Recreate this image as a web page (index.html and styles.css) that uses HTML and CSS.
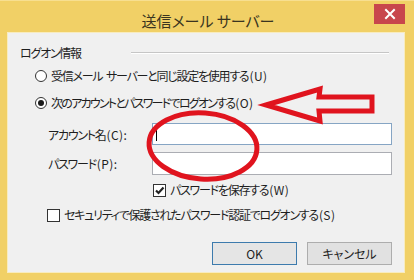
FILE: index.html
```html
<!DOCTYPE html>
<html lang="ja">
<head>
<meta charset="utf-8">
<title>送信メール サーバー</title>
<link rel="stylesheet" href="styles.css">
</head>
<body>
<div class="window">
  <div class="titlebar">
    <span class="title">送信メール サーバー</span>
    <div class="close" aria-label="閉じる">
      <svg width="12" height="12" viewBox="0 0 12 12"><path d="M2 2 L10 10 M10 2 L2 10" stroke="#fff" stroke-width="2" stroke-linecap="square"/></svg>
    </div>
  </div>
  <div class="client">
    <div class="group-head">
      <span class="group-label">ログオン情報</span>
      <span class="rule"></span>
    </div>
    <div class="opt opt-radio1">
      <span class="radio"></span>
      <span class="text">受信メール<span class="sp"> </span>サーバーと同じ設定を使用する<span class="key">(U)</span></span>
    </div>
    <div class="opt opt-radio2">
      <span class="radio checked"></span>
      <span class="text">次のアカウントとパスワードでログオンする<span class="key">(O)</span></span>
    </div>
    <div class="field field-account">
      <span class="field-label">アカウント名<span class="key">(C):</span></span>
      <div class="input focused"><span class="caret"></span></div>
    </div>
    <div class="field field-password">
      <span class="field-label">パスワード<span class="key">(P):</span></span>
      <div class="input"></div>
    </div>
    <div class="opt opt-save">
      <span class="check checked">
        <svg width="11" height="11" viewBox="0 0 11 11"><path d="M2 5.5 L4.5 8 L9.5 2.5" stroke="#222" stroke-width="2.2" fill="none"/></svg>
      </span>
      <span class="text">パスワードを保存する<span class="key">(W)</span></span>
    </div>
    <div class="opt opt-secure">
      <span class="check"></span>
      <span class="text">セキュリティで保護されたパスワード認証でログオンする<span class="key">(S)</span></span>
    </div>
    <div class="buttons">
      <div class="btn default">OK</div>
      <div class="btn">キャンセル</div>
    </div>
  </div>
  <svg class="annot" width="414" height="280" viewBox="0 0 414 280">
    <ellipse cx="203" cy="145" rx="54" ry="33" fill="none" stroke="#e0141e" stroke-width="5" transform="rotate(4 203 145)"/>
    <polygon points="266,104 320,88 319,96 372,96 372,110 319,110 320,120" fill="none" stroke="#e0141e" stroke-width="5" stroke-linejoin="miter"/>
  </svg>
</div>
</body>
</html>
```

FILE: styles.css
```css
* { box-sizing: border-box; }
html, body {
  margin: 0;
  padding: 0;
  width: 414px;
  height: 280px;
  overflow: hidden;
}
body {
  font-family: "Noto Sans CJK JP", "Noto Sans", sans-serif;
  font-feature-settings: "palt" 1;
  color: #1e1e1e;
}
.window {
  position: relative;
  width: 414px;
  height: 280px;
  background: #f1d066;
  border-top: 1px solid #f7df90;
  display: flex;
  flex-direction: column;
}
.titlebar {
  position: relative;
  height: 31px;
  flex: none;
  display: flex;
  align-items: center;
  justify-content: center;
}
.title {
  font-size: 15px;
  color: #3a3420;
  margin-top: 8px;
  margin-left: 2px;
}
.close {
  position: absolute;
  left: 374px;
  top: 3px;
  width: 31px;
  height: 20px;
  background: #c8464c;
  display: flex;
  align-items: center;
  justify-content: center;
}
.client {
  margin: 0 9px 0 7px;
  height: 241px;
  background: #f0f0f0;
  border: 1px solid #f8ecbf;
  padding: 12px 12px 0 12px;
  display: flex;
  flex-direction: column;
  font-size: 12px;
  letter-spacing: -1.25px;
}
.key {
  letter-spacing: 0.4px;
  margin-left: 1px;
}
.sp {
  letter-spacing: 1px;
}
.group-head {
  height: 16px;
  display: flex;
  align-items: center;
}
.group-label {
  line-height: 16px;
}
.rule {
  margin-left: 50px;
  margin-right: 3px;
  flex: 1;
  height: 2px;
  border-top: 1px solid #c6c6c6;
  border-bottom: 1px solid #ffffff;
}
.opt {
  height: 16px;
  display: flex;
  align-items: center;
  line-height: 16px;
}
.opt-radio1 { margin-top: 7px; margin-left: 15px; }
.opt-radio2 { margin-top: 11px; margin-left: 15px; }
.opt-radio2 .text { letter-spacing: -1.75px; }
.opt-radio2 .key { letter-spacing: 0.4px; }
.radio {
  width: 12px;
  height: 12px;
  border-radius: 50%;
  border: 1px solid #333;
  background: #fff;
  margin-right: 4px;
  display: flex;
  align-items: center;
  justify-content: center;
  flex: none;
}
.radio.checked::after {
  content: "";
  width: 6px;
  height: 6px;
  border-radius: 50%;
  background: #1a1a1a;
}
.check {
  width: 13px;
  height: 13px;
  border: 1px solid #333;
  background: #fff;
  margin-right: 4px;
  display: flex;
  align-items: center;
  justify-content: center;
  flex: none;
}
.field {
  display: flex;
  align-items: center;
  height: 22px;
}
.field-account { margin-top: 12px; }
.field-password { margin-top: 7px; height: 23px; }
.field-label {
  width: 104px;
  margin-left: 28px;
  flex: none;
}
.input {
  flex: 1;
  height: 100%;
  background: #fff;
  border: 1px solid #abadb3;
  display: flex;
  align-items: center;
}
.input.focused { border-color: #86a5c4; }
.caret {
  width: 1px;
  height: 13px;
  background: #000;
  margin-left: 3px;
}
.opt-save { margin-top: 7px; margin-left: 133px; }
.opt-secure { margin-top: 9px; margin-left: 27px; }
.buttons {
  margin-top: 19px;
  display: flex;
  justify-content: flex-end;
  gap: 10px;
  letter-spacing: 0;
}
.btn {
  width: 85px;
  height: 23px;
  background: #e1e1e1;
  border: 1px solid #adadad;
  display: flex;
  align-items: center;
  justify-content: center;
  font-size: 12px;
}
.btn.default {
  border-color: #3d7bad;
  background: #e5e5e5;
}
.annot {
  position: absolute;
  left: 0;
  top: 0;
  pointer-events: none;
}
```
